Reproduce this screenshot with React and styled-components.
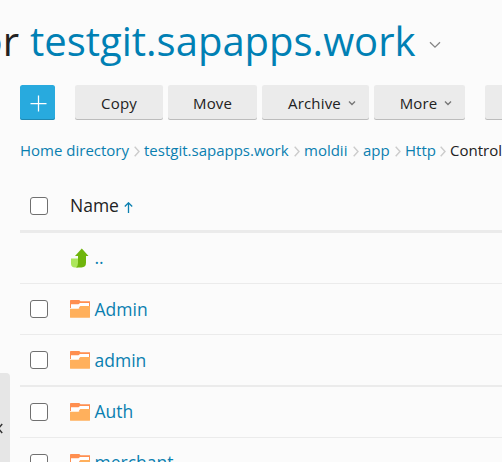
import React from "react";
import styled, { createGlobalStyle } from "styled-components";

const Global = createGlobalStyle`
  *, *::before, *::after { box-sizing: border-box; }
  body {
    margin: 0;
    overflow: hidden;
    background: #fbfbfb;
    color: #222;
    font-family: "Open Sans", "Noto Sans", sans-serif;
  }
`;

const Page = styled.div`
  position: relative;
  width: 502px;
  height: 462px;
  padding-left: 20px;
  overflow: hidden;
  white-space: nowrap;
`;

const Heading = styled.h1`
  display: flex;
  align-items: center;
  height: 85px;
  margin: 0 0 0 -37px;
  padding-bottom: 4px;
  font-size: 40px;
  font-weight: 400;
  line-height: 50px;
`;

const Prefix = styled.span`
  display: flex;
  justify-content: flex-end;
  width: 47px;
  padding-right: 11px;
`;

const Domain = styled.a`
  width: 385px;
  color: #0080b4;
`;

const HeadingCaret = styled.svg`
  margin: 9px 0 0 14px;
`;

const Toolbar = styled.div`
  display: flex;
  gap: 5px;
  height: 35px;
`;

const Button = styled.button`
  flex: none;
  display: flex;
  align-items: center;
  justify-content: center;
  gap: 7px;
  width: ${(p) => p.$width}px;
  height: 35px;
  margin: 0 ${(p) => p.$after || 0}px 0 0;
  padding: 2px 0 0 ${(p) => (p.$menu ? 13 : p.$primary ? 2 : 0)}px;
  border: 0;
  border-radius: 2.5px;
  background: ${(p) => (p.$primary ? "#28aade" : "#ebebeb")};
  box-shadow: inset 0 -1px ${(p) => (p.$primary ? "#1f88b2" : "#bcbcbc")};
  color: #222;
  font: 500 15px/35px "Open Sans", sans-serif;
  letter-spacing: 0.15px;
`;

const Breadcrumbs = styled.nav`
  display: flex;
  align-items: center;
  height: 60px;
  margin-bottom: 2px;
  font-size: 15px;
`;

const Crumb = styled.a`
  flex: none;
  width: ${(p) => p.$width}px;
  color: ${(p) => (p.$current ? "#222" : "#0a7fb0")};
`;

const Separator = styled.svg`
  flex: none;
  margin: 2px 4px 0 5px;
`;

const Row = styled.div`
  display: flex;
  align-items: center;
  height: ${(p) => p.$height}px;
  padding-left: 10px;
  border-bottom: ${(p) => p.$line || 1}px solid #ebebeb;
  font-size: 17.5px;
`;

const Check = styled.span`
  flex: none;
  width: 18px;
  height: 18px;
  margin-right: 22px;
  border: 1px solid #707070;
  border-radius: 3px;
  background: #fff;
  visibility: ${(p) => (p.$hidden ? "hidden" : "visible")};
`;

const Icon = styled.svg`
  flex: none;
  margin-right: 4.5px;
`;

const Label = styled.span`
  padding-bottom: ${(p) => p.$lift || 0}px;
`;

const Name = styled.a`
  padding-bottom: ${(p) => p.$lift || 0}px;
  color: #0a7fb0;
`;

const SortArrow = styled.svg`
  margin: 3px 0 0 5px;
`;

const SideHandle = styled.div`
  position: absolute;
  left: 0;
  top: 373px;
  width: 10px;
  height: 110px;
  padding-top: 50px;
  border-radius: 0 4px 0 0;
  background: #e6e6e6;
`;

const HandleArrow = styled.svg`
  display: block;
`;

const Caret = () => (
  <svg width="8" height="6" viewBox="0 0 8 6" fill="none" stroke="#777" strokeWidth="1.4">
    <path d="M1 .5l3 3 3-3" />
  </svg>
);

const Chevron = () => (
  <Separator width="6" height="11" viewBox="0 0 6 11" fill="none" stroke="#ccc" strokeWidth="1.4">
    <path d="M.7 .8L5 5.5.7 10.2" />
  </Separator>
);

const Folder = () => (
  <Icon width="20" height="18" viewBox="0 0 20 18">
    <path d="M0 .8Q0 0 .8 0H9.3L10.5 1.3H20V8H0z" fill="#ff8f50" />
    <path d="M1 4.2H8.5L10 2.9H19V6.2H10L8.5 9H1z" fill="#fff" />
    <path d="M0 8.7H8.2Q9 8.7 9.5 8L10.3 6.7Q10.8 6 11.5 6H20V17.2Q20 17.8 19.3 17.8H.7Q0 17.8 0 17.2z" fill="#ffb05c" />
  </Icon>
);

const UpIcon = () => (
  <Icon width="20" height="20" viewBox="0 0 20 20">
    <path d="M1 10.5H8V19.4H5Q1 19.4 1 15.5z" fill="#ace65c" />
    <path d="M11.8.5L18.5 8H16V14.8Q16 19.4 11.5 19.4H6Q8 18 8 15V8H5z" fill="#6fb50c" />
  </Icon>
);

const crumbs = [
  ["Home directory", 109],
  ["testgit.sapapps.work", 145],
  ["moldii", 44],
  ["app", 27],
  ["Http", 30],
];

const folders = [
  ["Admin", 51, 1, 0],
  ["admin", 52, 2, 0],
  ["Auth", 51, 1, 2],
  ["merchant", 51, 1, 2],
];

export default function App() {
  return (
    <>
      <Global />
      <Page>
        <Heading>
          <Prefix>or</Prefix>
          <Domain>testgit.sapapps.work</Domain>
          <HeadingCaret width="12" height="8" viewBox="0 0 12 8" fill="none" stroke="#858585" strokeWidth="1.3">
            <path d="M1 1.2l5 5 5-5" />
          </HeadingCaret>
        </Heading>
        <Toolbar>
          <Button $width={35} $after={15} $primary aria-label="Add">
            <svg width="17" height="17" viewBox="0 0 17 17" stroke="#fff" strokeWidth="1.25">
              <path d="M8.5 .5v16M.5 8.5h16" />
            </svg>
          </Button>
          <Button $width={88}>Copy</Button>
          <Button $width={89}>Move</Button>
          <Button $width={107} $menu>Archive<Caret /></Button>
          <Button $width={91} $after={15} $menu>More<Caret /></Button>
          <Button $width={88} />
        </Toolbar>
        <Breadcrumbs>
          {crumbs.map(([label, width]) => (
            <React.Fragment key={label}>
              <Crumb $width={width}>{label}</Crumb>
              <Chevron />
            </React.Fragment>
          ))}
          <Crumb $current>Controllers</Crumb>
        </Breadcrumbs>
        <Row $height={51} $line={3}>
          <Check />
          <Label $lift={2}>Name</Label>
          <SortArrow width="9" height="11" viewBox="0 0 9 11" fill="none" stroke="#0a7fb0" strokeWidth="1.3">
            <path d="M4.5 11V1M.8 4.5l3.7-3.7 3.7 3.7" />
          </SortArrow>
        </Row>
        <Row $height={51}>
          <Check $hidden />
          <UpIcon />
          <Name $lift={2}>..</Name>
        </Row>
        {folders.map(([label, height, line, lift]) => (
          <Row key={label} $height={height} $line={line}>
            <Check />
            <Folder />
            <Name $lift={lift}>{label}</Name>
          </Row>
        ))}
        <SideHandle>
          <HandleArrow width="4" height="11" viewBox="0 0 4 11" fill="none" stroke="#333" strokeWidth="1.5">
            <path d="M2.2 1L-1.5 5.5 2.2 10" />
          </HandleArrow>
        </SideHandle>
      </Page>
    </>
  );
}
